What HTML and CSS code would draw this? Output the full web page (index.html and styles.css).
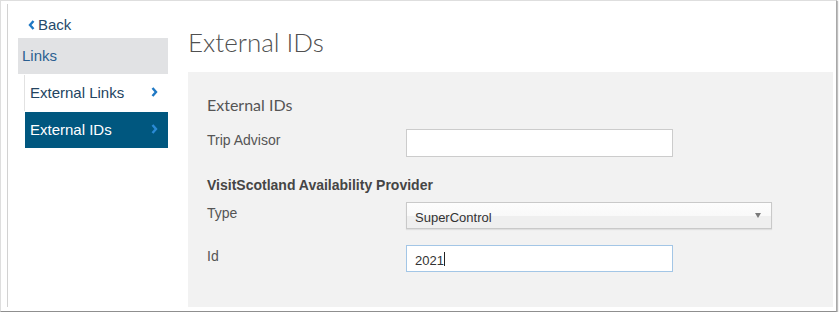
FILE: index.html
```html
<!DOCTYPE html>
<html>
<head>
<meta charset="utf-8">
<link rel="stylesheet" href="styles.css">
</head>
<body>
<div class="window">
  <div class="page">
    <aside class="sidebar">
      <a class="back" href="#"><svg class="back-chev" width="7" height="10" viewBox="0 0 7 10"><path d="M5.5 1 L2 5 L5.5 9" fill="none" stroke="#1f78c4" stroke-width="2.4"/></svg>Back</a>
      <div class="nav-header">Links</div>
      <ul class="nav-list">
        <li class="nav-item">External Links<svg class="chev" width="7" height="10" viewBox="0 0 7 10"><path d="M1.5 1 L5 5 L1.5 9" fill="none" stroke="#1f78c4" stroke-width="2.4"/></svg></li>
        <li class="nav-item active">External IDs<svg class="chev" width="7" height="10" viewBox="0 0 7 10"><path d="M1.5 1 L5 5 L1.5 9" fill="none" stroke="#2a8ad6" stroke-width="2.4"/></svg></li>
      </ul>
    </aside>
    <main class="main">
      <h1 class="title">External IDs</h1>
      <section class="panel">
        <h2 class="panel-title">External IDs</h2>
        <div class="row row-first">
          <div class="label">Trip Advisor</div>
          <div class="field input tall"></div>
        </div>
        <h3 class="group-title">VisitScotland Availability Provider</h3>
        <div class="row">
          <div class="label">Type</div>
          <div class="field select">SuperControl<span class="arrow"></span></div>
        </div>
        <div class="row row-id">
          <div class="label">Id</div>
          <div class="field input focused">2021<span class="caret"></span></div>
        </div>
      </section>
    </main>
  </div>
</div>
</body>
</html>
```
FILE: styles.css
```css
* { box-sizing: border-box; }
html, body { margin: 0; padding: 0; background: #ffffff; }
body { font-family: "Liberation Sans", Arial, sans-serif; }

.window {
  width: 837px;
  height: 312px;
  border: 1px solid #dedede;
  border-right-color: #a9a9a9;
  border-bottom-color: #8f8f8f;
  box-shadow: 1px 1px 1px rgba(0,0,0,0.25);
  padding: 3px 0 4px 0;
  display: flex;
}

.page {
  flex: 1;
  margin-left: 6px;
  border-left: 1px solid #d2d2d2;
  display: flex;
}

.sidebar {
  width: 160px;
  padding-left: 10px;
  display: flex;
  flex-direction: column;
}

.back {
  display: flex;
  align-items: center;
  margin-top: 12px;
  margin-left: 10px;
  height: 17px;
  font-size: 15px;
  color: #264a6b;
  text-decoration: none;
}
.back-chev { margin-right: 3px; }

.nav-header {
  margin-top: 5px;
  height: 36px;
  line-height: 35px;
  background: #e1e2e4;
  color: #2a5f91;
  font-size: 15px;
  padding-left: 4px;
}

.nav-list {
  list-style: none;
  margin: 1px 0 0 6px;
  padding: 0;
  display: flex;
  flex-direction: column;
  gap: 1px;
}
.nav-item {
  height: 36px;
  display: flex;
  align-items: center;
  justify-content: space-between;
  padding: 0 10px 2px 5px;
  border-left: 1px solid #e2e2e2;
  font-size: 15px;
  color: #234461;
}
.nav-item.active {
  background: #00577f;
  color: #ffffff;
  border-left-color: #ffffff;
}

.main {
  flex: 1;
  margin-left: 20px;
  margin-right: 3px;
  display: flex;
  flex-direction: column;
}

.title {
  margin: 23px 0 15px 0;
  font-family: Lato, "Open Sans", sans-serif;
  font-weight: 300;
  font-size: 26px;
  line-height: 30px;
  color: #505050;
}

.panel {
  flex: 1;
  background: #f2f2f2;
  padding: 23px 19px 0 19px;
}

.panel-title {
  margin: 0 0 14px 0;
  font-family: Lato, "Open Sans", sans-serif;
  font-weight: 400;
  font-size: 16px;
  line-height: 20px;
  color: #555555;
}

.row {
  display: grid;
  grid-template-columns: 199px auto;
  align-items: start;
}
.row-id { margin-top: 16px; }

.label {
  padding-top: 3px;
  font-size: 14px;
  line-height: 16px;
  color: #555555;
}

.group-title {
  margin: 20px 0 9px 0;
  font-size: 14px;
  line-height: 16px;
  font-weight: 700;
  color: #454545;
}

.field {
  height: 27px;
  font-size: 13px;
  line-height: 15px;
  color: #333333;
  padding: 7px 0 0 8px;
  display: flex;
  align-items: flex-start;
}

.input {
  width: 267px;
  background: #ffffff;
  border: 1px solid #cccccc;
}
.input.tall { height: 28px; }
.input.focused { border-color: #a3c6e6; }

.caret {
  width: 1px;
  height: 14px;
  margin-top: -1px;
  background: #222222;
}

.select {
  width: 366px;
  border: 1px solid #c9c9c9;
  background: linear-gradient(#fdfdfd 0%, #f9f9f9 50%, #efefef 50%, #efefef 100%);
  box-shadow: 0 1px 1px rgba(0,0,0,0.08);
  justify-content: space-between;
  padding-right: 10px;
}
.arrow {
  width: 0;
  height: 0;
  margin-top: 3px;
  border-left: 3.5px solid transparent;
  border-right: 3.5px solid transparent;
  border-top: 5px solid #7a7a7a;
}
```
